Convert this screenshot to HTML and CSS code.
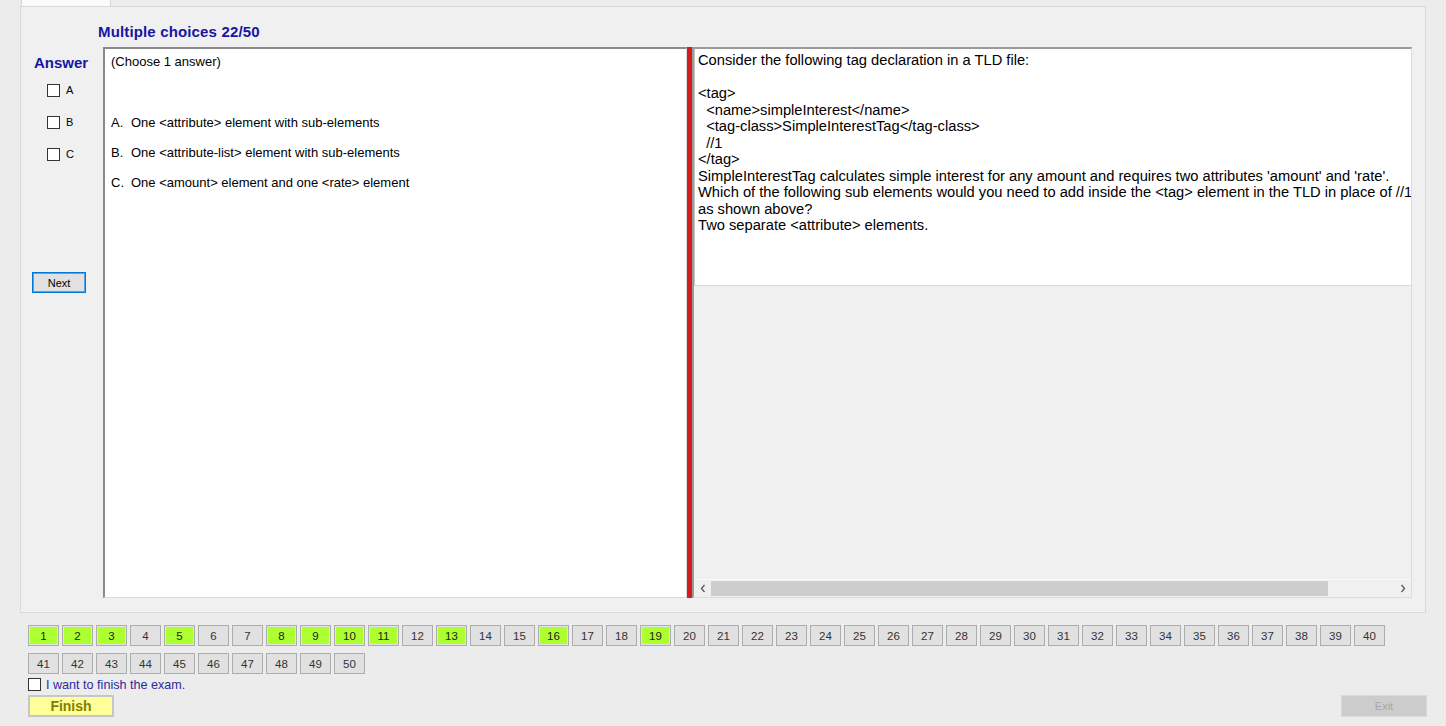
FILE: index.html
```html
<!DOCTYPE html>
<html lang="en">
<head>
<meta charset="utf-8">
<title>Exam</title>
<link rel="stylesheet" href="styles.css">
</head>
<body>
<div class="tabs"><div class="tab"></div></div>
<div class="tabpage">
  <div class="title">Multiple choices 22/50</div>
  <div class="main">
    <div class="answers">
      <div class="answer-head">Answer</div>
      <div class="opt"><span class="cb"></span><span>A</span></div>
      <div class="opt"><span class="cb"></span><span>B</span></div>
      <div class="opt"><span class="cb"></span><span>C</span></div>
      <button class="next">Next</button>
    </div>
    <div class="choices">
      <div class="hint">(Choose 1 answer)</div>
      <div class="choice"><span class="key">A.</span>One &lt;attribute&gt; element with sub-elements</div>
      <div class="choice"><span class="key">B.</span>One &lt;attribute-list&gt; element with sub-elements</div>
      <div class="choice"><span class="key">C.</span>One &lt;amount&gt; element and one &lt;rate&gt; element</div>
    </div>
    <div class="splitter"></div>
    <div class="question">
      <div class="qtext">Consider the following tag declaration in a TLD file:

&lt;tag&gt;
  &lt;name&gt;simpleInterest&lt;/name&gt;
  &lt;tag-class&gt;SimpleInterestTag&lt;/tag-class&gt;
  //1
&lt;/tag&gt;
SimpleInterestTag calculates simple interest for any amount and requires two attributes 'amount' and 'rate'.
Which of the following sub elements would you need to add inside the &lt;tag&gt; element in the TLD in place of //1
as shown above?
Two separate &lt;attribute&gt; elements.</div>
      <div class="qfill"></div>
      <div class="hscroll">
        <span class="arrow"><svg width="6" height="9" viewBox="0 0 6 9"><path d="M4.5 1 L1.5 4.5 L4.5 8" fill="none" stroke="#606060" stroke-width="1.4"/></svg></span>
        <div class="track"><div class="thumb"></div></div>
        <span class="arrow"><svg width="6" height="9" viewBox="0 0 6 9"><path d="M1.5 1 L4.5 4.5 L1.5 8" fill="none" stroke="#606060" stroke-width="1.4"/></svg></span>
      </div>
    </div>
  </div>
</div>
<div class="bottom">
  <div class="nums">
    <button class="num done">1</button><button class="num done">2</button><button class="num done">3</button><button class="num">4</button><button class="num done">5</button><button class="num">6</button><button class="num">7</button><button class="num done">8</button><button class="num done">9</button><button class="num done">10</button>
    <button class="num done">11</button><button class="num">12</button><button class="num done">13</button><button class="num">14</button><button class="num">15</button><button class="num done">16</button><button class="num">17</button><button class="num">18</button><button class="num done">19</button><button class="num">20</button>
    <button class="num">21</button><button class="num">22</button><button class="num">23</button><button class="num">24</button><button class="num">25</button><button class="num">26</button><button class="num">27</button><button class="num">28</button><button class="num">29</button><button class="num">30</button>
    <button class="num">31</button><button class="num">32</button><button class="num">33</button><button class="num">34</button><button class="num">35</button><button class="num">36</button><button class="num">37</button><button class="num">38</button><button class="num">39</button><button class="num">40</button>
  </div>
  <div class="nums">
    <button class="num">41</button><button class="num">42</button><button class="num">43</button><button class="num">44</button><button class="num">45</button><button class="num">46</button><button class="num">47</button><button class="num">48</button><button class="num">49</button><button class="num">50</button>
  </div>
  <div class="finish-check"><span class="cb"></span><span>I want to finish the exam.</span></div>
  <div class="actions">
    <button class="finish">Finish</button>
    <button class="exit">Exit</button>
  </div>
</div>
</body>
</html>
```

FILE: styles.css
```css
html, body {
  margin: 0;
  padding: 0;
}
body {
  width: 1446px;
  height: 726px;
  overflow: hidden;
  background: #ececec;
  font-family: "Liberation Sans", Arial, sans-serif;
  color: #000;
}
button {
  font-family: "Liberation Sans", Arial, sans-serif;
  padding: 0;
  margin: 0;
  cursor: default;
}
.tabs {
  height: 6px;
  padding-left: 21px;
}
.tab {
  width: 90px;
  height: 6px;
  box-sizing: border-box;
  background: #fbfbfb;
  border-left: 1px solid #d4d4d4;
  border-right: 1px solid #d4d4d4;
}
.tabpage {
  margin-left: 20px;
  width: 1406px;
  height: 607px;
  box-sizing: border-box;
  border: 1px solid #d9d9d9;
  background: #f0f0f0;
  padding-top: 17px;
}
.title {
  padding-left: 77px;
  font-size: 15px;
  font-weight: bold;
  line-height: 16px;
  color: #1616a2;
  letter-spacing: 0.15px;
}
.main {
  display: flex;
  margin-top: 7px;
  height: 551px;
}
.answers {
  width: 82px;
  flex: none;
  padding-top: 8px;
  box-sizing: border-box;
}
.answer-head {
  padding-left: 13px;
  font-size: 15px;
  font-weight: bold;
  line-height: 16px;
  color: #1616a2;
}
.opt {
  display: flex;
  align-items: center;
  gap: 6px;
  margin-left: 26px;
  margin-top: 19px;
  height: 13px;
  font-size: 11px;
  line-height: 13px;
}
.answer-head + .opt {
  margin-top: 13px;
}
.cb {
  display: inline-block;
  width: 13px;
  height: 13px;
  box-sizing: border-box;
  border: 1px solid #333;
  background: #fff;
  flex: none;
}
.next {
  display: block;
  margin: 111px 0 0 11px;
  width: 54px;
  height: 21px;
  box-sizing: border-box;
  border: 1px solid #0078d7;
  box-shadow: inset 0 0 0 1px #5aa3e3;
  background: #e1e1e1;
  font-size: 11px;
  color: #000;
}
.choices {
  width: 584px;
  flex: none;
  box-sizing: border-box;
  background: #fff;
  border-top: 2px solid #8a8a8a;
  border-left: 2px solid #8a8a8a;
  border-right: 1px solid #dcdcdc;
  border-bottom: 1px solid #dcdcdc;
  padding: 5px 0 0 6px;
  font-size: 13px;
  line-height: 15px;
}
.choice {
  margin-top: 15px;
}
.hint + .choice {
  margin-top: 46px;
}
.key {
  display: inline-block;
  width: 20px;
}
.splitter {
  width: 5px;
  flex: none;
  background: #d41c1c;
}
.question {
  width: 720px;
  flex: none;
  box-sizing: border-box;
  border-left: 2px solid #9a9a9a;
  border-top: 2px solid #9a9a9a;
  border-right: 1px solid #dcdcdc;
  border-bottom: 1px solid #dcdcdc;
  display: flex;
  flex-direction: column;
  background: #f0f0f0;
}
.qtext {
  height: 237px;
  flex: none;
  box-sizing: border-box;
  background: #fff;
  border-left: 1px solid #c4c4c4;
  border-bottom: 1px solid #d8d8d8;
  padding: 3px 0 0 3px;
  font-size: 14.7px;
  line-height: 16.5px;
  white-space: pre;
  overflow: hidden;
}
.qfill {
  flex: 1;
}
.hscroll {
  height: 17px;
  flex: none;
  display: flex;
  align-items: center;
  border-top: 1px solid #fafafa;
  background: #f0f0f0;
}
.arrow {
  width: 17px;
  height: 17px;
  display: flex;
  align-items: center;
  justify-content: center;
  flex: none;
}
.track {
  flex: 1;
  height: 15px;
}
.thumb {
  width: 617px;
  height: 15px;
  background: #cdcdcd;
}
.bottom {
  padding: 12px 0 0 28px;
}
.nums {
  display: flex;
  gap: 3px;
}
.nums + .nums {
  margin-top: 7px;
}
.num {
  width: 31px;
  height: 21px;
  box-sizing: border-box;
  border: 1px solid #adadad;
  background: #e1e1e1;
  font-size: 11.5px;
  color: #333;
  flex: none;
}
.num.done {
  background: #adff2f;
  box-shadow: inset 0 0 0 1px #e4e4e4;
  color: #222;
}
.finish-check {
  display: flex;
  align-items: center;
  gap: 5px;
  margin-top: 4px;
  height: 13px;
  font-size: 12.6px;
  color: #2c2a9e;
}
.actions {
  display: flex;
  justify-content: space-between;
  margin-top: 4px;
  padding-right: 19px;
}
.finish {
  width: 86px;
  height: 22px;
  box-sizing: border-box;
  border: 2px solid #c6c6c6;
  background: #ffff99;
  font-size: 14px;
  font-weight: bold;
  color: #808000;
}
.exit {
  width: 86px;
  height: 22px;
  box-sizing: border-box;
  border: 1px solid #dadada;
  background: #cccccc;
  font-size: 11px;
  color: #a8a8a8;
}
```
